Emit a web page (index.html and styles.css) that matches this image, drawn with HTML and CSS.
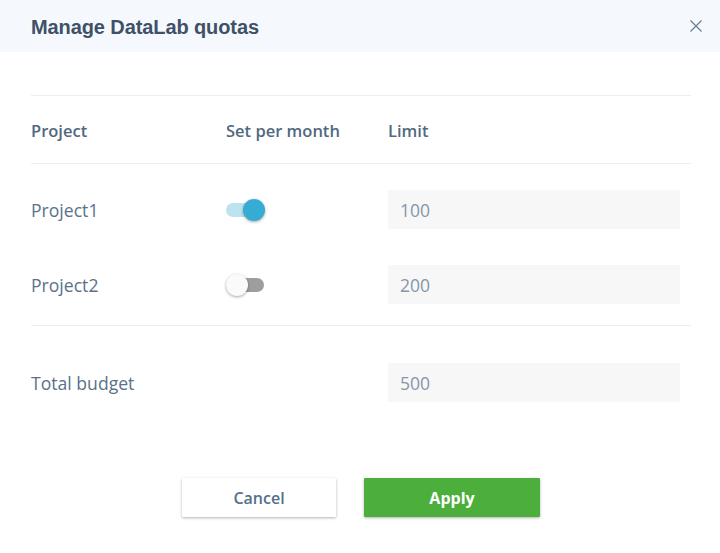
FILE: index.html
```html
<!DOCTYPE html>
<html>
<head>
<meta charset="utf-8">
<link rel="stylesheet" href="styles.css">
</head>
<body>
<div class="dialog">
  <div class="header">
    <h1 class="title">Manage DataLab quotas</h1>
    <button class="close" aria-label="Close">
      <svg width="12" height="12" viewBox="0 0 12 12"><path d="M0.5 0.5 L11.5 11.5 M11.5 0.5 L0.5 11.5" stroke="#5f7893" stroke-width="1.1" fill="none"/></svg>
    </button>
  </div>
  <div class="content">
    <div class="thead">
      <div class="c1">Project</div>
      <div class="c2">Set per month</div>
      <div class="c3">Limit</div>
    </div>
    <div class="rows">
      <div class="row">
        <div class="c1">Project1</div>
        <div class="c2"><span class="switch on"><span class="track"></span><span class="knob"></span></span></div>
        <div class="c3"><div class="input">100</div></div>
      </div>
      <div class="row">
        <div class="c1">Project2</div>
        <div class="c2"><span class="switch"><span class="track"></span><span class="knob"></span></span></div>
        <div class="c3"><div class="input">200</div></div>
      </div>
    </div>
    <div class="total">
      <div class="row">
        <div class="c1">Total budget</div>
        <div class="c2"></div>
        <div class="c3"><div class="input">500</div></div>
      </div>
    </div>
  </div>
  <div class="actions">
    <button class="btn cancel">Cancel</button>
    <button class="btn apply">Apply</button>
  </div>
</div>
</body>
</html>
```
FILE: styles.css
```css
html, body {
  margin: 0;
  padding: 0;
  background: #ffffff;
}
body {
  font-family: "Open Sans", "Noto Sans", sans-serif;
  color: #5a7189;
}
.dialog {
  width: 720px;
  height: 553px;
  display: flex;
  flex-direction: column;
}
.header {
  height: 52px;
  background: #f5f9fd;
  display: flex;
  align-items: center;
  justify-content: space-between;
  padding: 2px 18px 0 31px;
  box-sizing: border-box;
}
.title {
  margin: 0;
  font-family: "Liberation Sans", Arial, sans-serif;
  font-weight: bold;
  font-size: 20px;
  color: #3f5168;
  letter-spacing: -0.1px;
}
.close {
  border: 0;
  background: transparent;
  padding: 0;
  width: 12px;
  height: 12px;
  display: flex;
  margin-top: -2px;
}
.content {
  margin: 43px 29px 0 31px;
}
.thead {
  display: flex;
  align-items: center;
  height: 66px;
  padding-top: 1px;
  border-top: 1px solid #ebedf0;
  border-bottom: 1px solid #ebedf0;
  font-weight: 600;
  font-size: 16.5px;
  color: #51697f;
}
.c1 { width: 195px; }
.c2 { width: 162px; display: flex; align-items: center; }
.c3 { flex: 1; padding-right: 11px; }
.rows {
  padding: 26px 0 21px;
  display: flex;
  flex-direction: column;
  gap: 36px;
  border-bottom: 1px solid #ebedf0;
}
.row {
  display: flex;
  align-items: center;
  font-size: 17.6px;
}
.total {
  padding-top: 37px;
}
.input {
  height: 39px;
  background: #f7f7f7;
  display: flex;
  align-items: center;
  padding-left: 12px;
  color: #8596ab;
  font-size: 17.5px;
}
.switch {
  position: relative;
  width: 40px;
  height: 22px;
  display: inline-block;
}
.track {
  position: absolute;
  left: 0;
  top: 4px;
  width: 38px;
  height: 14px;
  border-radius: 7px;
  background: #9e9e9e;
}
.knob {
  position: absolute;
  left: 0;
  top: 0;
  width: 22px;
  height: 22px;
  border-radius: 50%;
  background: #fafafa;
  box-shadow: 0 1px 3px rgba(0,0,0,0.35);
}
.switch.on .track {
  background: #bde3f0;
  width: 36px;
}
.switch.on .knob {
  left: 17px;
  background: #36acd4;
}
.actions {
  margin-top: 76px;
  display: flex;
  justify-content: center;
  gap: 28px;
}
.btn {
  height: 39px;
  border: 0;
  font-family: "Open Sans", sans-serif;
  font-size: 16px;
  border-radius: 1px;
  box-shadow: 0 1px 3px rgba(0,0,0,0.3);
}
.cancel {
  width: 154px;
  background: #ffffff;
  color: #55708a;
  font-weight: 600;
}
.apply {
  width: 176px;
  background: #4caf3c;
  color: #ffffff;
  font-weight: 700;
  margin-right: -2px;
}
```
